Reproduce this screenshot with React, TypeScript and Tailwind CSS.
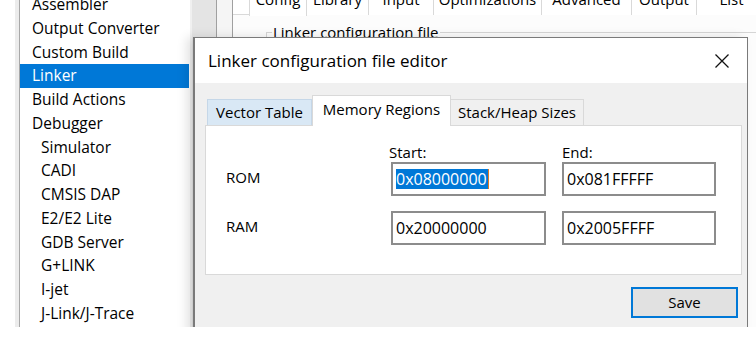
const treeItems: { label: string; sub: boolean }[] = [
  { label: "Assembler", sub: false },
  { label: "Output Converter", sub: false },
  { label: "Custom Build", sub: false },
  { label: "Linker", sub: false },
  { label: "Build Actions", sub: false },
  { label: "Debugger", sub: false },
  { label: "Simulator", sub: true },
  { label: "CADI", sub: true },
  { label: "CMSIS DAP", sub: true },
  { label: "E2/E2 Lite", sub: true },
  { label: "GDB Server", sub: true },
  { label: "G+LINK", sub: true },
  { label: "I-jet", sub: true },
  { label: "J-Link/J-Trace", sub: true },
];

const backTabs = [
  { label: "Config", w: "w-[58px]", active: true },
  { label: "Library", w: "w-[62px]", active: false },
  { label: "Input", w: "w-[65px]", active: false },
  { label: "Optimizations", w: "w-[108px]", active: false },
  { label: "Advanced", w: "w-[90px]", active: false },
  { label: "Output", w: "w-[65px]", active: false },
  { label: "List", w: "w-[70px]", active: false },
];

function Field({ value, selected }: { value: string; selected?: boolean }) {
  return (
    <div className="h-[34px] border-2 border-[#8c8c8c] bg-white flex items-center pl-[3px] text-[16px]">
      {selected ? (
        <span className="bg-[#0078d7] text-white leading-[20px] pr-[1px] border-r border-[#e07a20]">
          {value}
        </span>
      ) : (
        <span className="leading-[20px]">{value}</span>
      )}
    </div>
  );
}

export default function App(): React.ReactElement {
  return (
    <div className="w-[756px] h-[337px] bg-white font-['Open_Sans',sans-serif] text-black text-[15px]">
      <div className="relative h-[327px] flex overflow-hidden">
        {/* left edge */}
        <div className="w-[15px] shrink-0 bg-white"></div>
        <div className="w-[5px] shrink-0 bg-[#ececec] border-r border-[#a8a8a8]"></div>

        {/* options tree */}
        <div className="w-[170px] shrink-0 bg-white overflow-hidden text-[15.5px]">
          <div className="mt-[-7.25px]">
            {treeItems.map((item) => (
              <div
                key={item.label}
                className={
                  "h-[23.75px] flex items-center mr-[1px] " +
                  (item.label === "Linker" ? "bg-[#0078d7] text-white" : "")
                }
              >
                <span className={item.sub ? "pl-[21px]" : "pl-[12px]"}>{item.label}</span>
              </div>
            ))}
          </div>
        </div>

        {/* splitter + frames behind dialog */}
        <div className="w-[27px] shrink-0 bg-[#e4e4e4] border-l-2 border-[#f0f0f0] border-r border-r-[#a0a0a0]"></div>
        <div className="w-[16px] shrink-0 bg-[#f5f5f5] border-r border-[#a0a0a0]"></div>

        {/* category page behind the dialog */}
        <div className="flex-1 min-w-0 overflow-hidden bg-[#fcfcfc]">
          <div className="flex pl-[16px] h-[15px] border-b border-[#d9d9d9] bg-white">
            {backTabs.map((t) => (
              <div
                key={t.label}
                className={
                  "relative h-[15px] overflow-hidden border-r border-[#d9d9d9] shrink-0 bg-white " +
                  t.w +
                  (t.active ? " border-l h-[16px] z-10" : "")
                }
              >
                <span className="absolute left-0 right-0 text-center top-[-11px] leading-[20px] whitespace-nowrap">
                  {t.label}
                </span>
              </div>
            ))}
          </div>
          <div className="relative ml-[33px] mt-[17px] border-t border-l border-[#d5d5d5] h-[40px]">
            <span className="absolute left-[5px] -top-[11px] bg-[#fcfcfc] px-[1px] leading-[20px] whitespace-nowrap">
              Linker configuration file
            </span>
          </div>
        </div>

        {/* dialog window */}
        <div className="absolute left-[193px] top-[37px] w-[555px] h-[300px] bg-[#f0f0f0] border border-[#7a7a7a] border-l-2 shadow-[-6px_0_10px_rgba(0,0,0,0.12)] flex flex-col">
          <div className="h-[45px] bg-white flex items-center justify-between pl-[13px] pr-[17px] shrink-0">
            <span className="text-[17px]">Linker configuration file editor</span>
            <svg width="16" height="16" viewBox="0 0 16 16">
              <path d="M1.5 1.5 L14.5 14.5 M14.5 1.5 L1.5 14.5" stroke="#111" strokeWidth="1.3" fill="none" />
            </svg>
          </div>

          <div className="pt-[12px] pl-[10px] pr-[5px]">
            <div className="flex items-end pl-[2px] h-[30px]">
              <div className="w-[105px] h-[26px] bg-[#d9e8f5] border border-b-0 border-[#c5d7e8] flex items-center justify-center">
                Vector Table
              </div>
              <div className="w-[139px] h-[31px] bg-white border border-b-0 border-[#d9d9d9] -mb-[1px] relative z-10 flex items-start justify-center pt-[2px]">
                Memory Regions
              </div>
              <div className="w-[133px] h-[26px] bg-[#f0f0f0] border border-l-0 border-b-0 border-[#d9d9d9] flex items-center justify-center">
                Stack/Heap Sizes
              </div>
            </div>

            <div className="h-[150px] bg-white border border-[#d9d9d9] pt-[17px] pl-[20px]">
              <div className="flex gap-[16px]">
                <div className="w-[149px]"></div>
                <div className="w-[155px] leading-[19px] -ml-[2px] mr-[2px]">Start:</div>
                <div className="w-[154px] leading-[19px]">End:</div>
              </div>
              <div className="flex gap-[16px] items-center">
                <div className="w-[149px] -mt-[3px]">ROM</div>
                <div className="w-[155px]">
                  <Field value="0x08000000" selected />
                </div>
                <div className="w-[154px]">
                  <Field value="0x081FFFFF" />
                </div>
              </div>
              <div className="flex gap-[16px] items-center mt-[15px]">
                <div className="w-[149px] -mt-[3px]">RAM</div>
                <div className="w-[155px]">
                  <Field value="0x20000000" />
                </div>
                <div className="w-[154px]">
                  <Field value="0x2005FFFF" />
                </div>
              </div>
            </div>

            <div className="flex justify-end pr-[4px] mt-[12px]">
              <button className="w-[107px] h-[31px] bg-[#e1e1e1] border-2 border-[#0078d7] text-[15px]">
                Save
              </button>
            </div>
          </div>
        </div>
      </div>
    </div>
  );
}
